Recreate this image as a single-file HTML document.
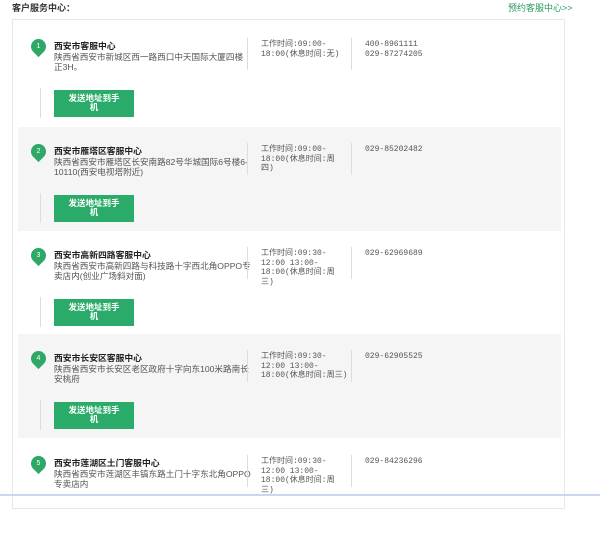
<!DOCTYPE html>
<html><head><meta charset="utf-8"><style>
*{margin:0;padding:0;box-sizing:border-box}
body{width:600px;height:496px;background:#fff;font-family:"Liberation Sans","Noto Sans CJK SC",sans-serif;font-size:8.6px;color:#444;position:relative;overflow:hidden}
.h{position:absolute;left:12px;top:1px;font-size:9px;font-weight:bold;color:#333}
.lk{position:absolute;left:508px;top:1px;font-size:9px;color:#2a9a5c}
.box{position:absolute;left:12px;top:19px;width:553px;height:490px;border:1px solid #e8e8e8}
.it{position:absolute;left:5px;width:543px;height:104px;white-space:nowrap}
.g{background:#f5f5f5}
.pin{position:absolute;left:13px;top:17px;width:15px;height:15px;border-radius:50% 50% 50% 0;transform:rotate(-45deg);background:#2ea866}
.pin span{position:absolute;left:0;top:0;width:15px;height:15px;transform:rotate(45deg);color:#fff;font-size:7px;text-align:center;line-height:15px}
.t{position:absolute;left:36px;top:17px;font-size:8.8px;font-weight:bold;color:#222}
.a{position:absolute;left:36px;top:30px;line-height:10px;color:#555}
.d1{position:absolute;left:229px;top:16px;width:1px;height:32px;background:#ddd}
.w{position:absolute;left:243px;top:18px;line-height:9.5px;color:#555;font-family:"Liberation Mono","Noto Sans CJK SC",monospace;font-size:8px}
.d2{position:absolute;left:333px;top:16px;width:1px;height:32px;background:#ddd}
.p{position:absolute;left:347px;top:18px;line-height:9.5px;color:#555;font-family:"Liberation Mono",monospace;font-size:8px}
.vl{position:absolute;left:22px;top:66px;width:1px;height:30px;background:#ddd}
.b{position:absolute;left:36px;top:68px;width:80px;height:27px;background:#2bab6a;color:#fff;font-weight:bold;font-size:8.5px;text-align:center;line-height:9px;padding-top:4px}
.bl{position:absolute;left:0;top:494px;width:600px;height:2px;background:#c9d8ec}
</style></head><body>
<div class="h">客户服务中心：</div>
<div class="lk">预约客服中心&gt;&gt;</div>
<div class="box">
<div class="it" style="top:2px"><div class="pin"><span>1</span></div><div class="t">西安市客服中心</div><div class="a">陕西省西安市新城区西一路西口中天国际大厦四楼<br>正3H。</div><div class="d1"></div><div class="w">工作时间:09:00-<br>18:00(休息时间:无)</div><div class="d2"></div><div class="p">400-8961111<br>029-87274205</div><div class="vl"></div><div class="b">发送地址到手<br>机</div></div>
<div class="it g" style="top:107px"><div class="pin"><span>2</span></div><div class="t">西安市雁塔区客服中心</div><div class="a">陕西省西安市雁塔区长安南路82号华城国际6号楼6-<br>10110(西安电视塔附近)</div><div class="d1"></div><div class="w">工作时间:09:00-<br>18:00(休息时间:周<br>四)</div><div class="d2"></div><div class="p">029-85202482</div><div class="vl"></div><div class="b">发送地址到手<br>机</div></div>
<div class="it" style="top:211px"><div class="pin"><span>3</span></div><div class="t">西安市高新四路客服中心</div><div class="a">陕西省西安市高新四路与科技路十字西北角OPPO专<br>卖店内(创业广场斜对面)</div><div class="d1"></div><div class="w">工作时间:09:30-<br>12:00 13:00-<br>18:00(休息时间:周<br>三)</div><div class="d2"></div><div class="p">029-62969689</div><div class="vl"></div><div class="b">发送地址到手<br>机</div></div>
<div class="it g" style="top:314px"><div class="pin"><span>4</span></div><div class="t">西安市长安区客服中心</div><div class="a">陕西省西安市长安区老区政府十字向东100米路南长<br>安桃府</div><div class="d1"></div><div class="w">工作时间:09:30-<br>12:00 13:00-<br>18:00(休息时间:周三)</div><div class="d2"></div><div class="p">029-62905525</div><div class="vl"></div><div class="b">发送地址到手<br>机</div></div>
<div class="it" style="top:419px"><div class="pin"><span>5</span></div><div class="t">西安市莲湖区土门客服中心</div><div class="a">陕西省西安市莲湖区丰镐东路土门十字东北角OPPO<br>专卖店内</div><div class="d1"></div><div class="w">工作时间:09:30-<br>12:00 13:00-<br>18:00(休息时间:周<br>三)</div><div class="d2"></div><div class="p">029-84236296</div></div>
</div>
<div class="bl"></div>
</body></html>
